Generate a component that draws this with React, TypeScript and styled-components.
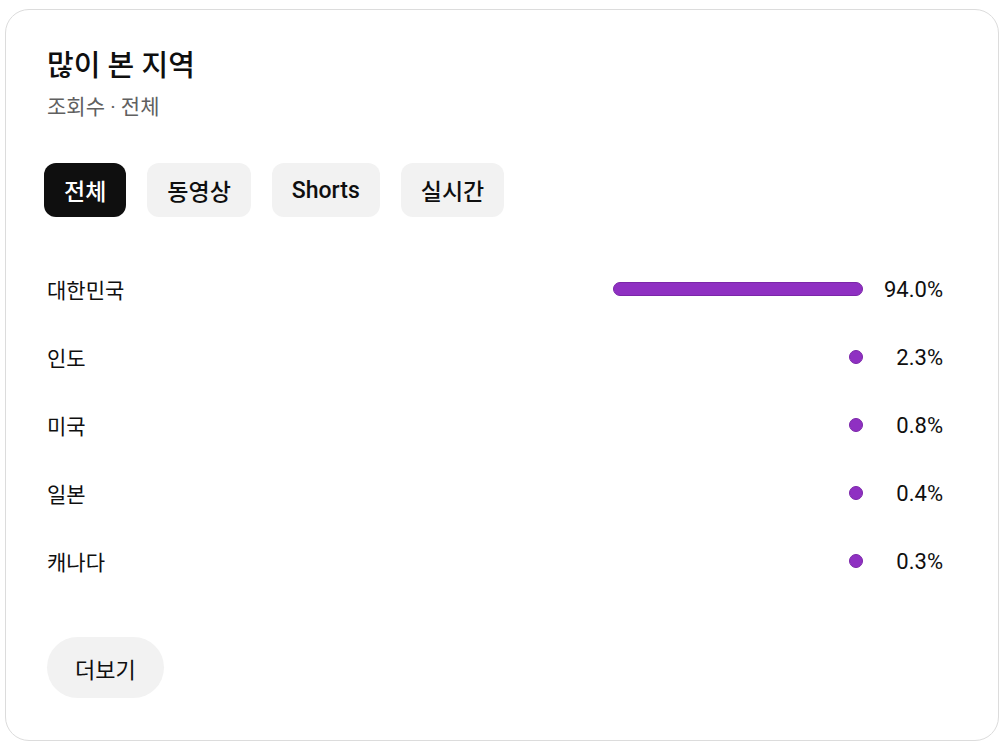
import React, { useState } from 'react';
import styled, { createGlobalStyle } from 'styled-components';

const GlobalStyle = createGlobalStyle`
  html, body {
    margin: 0;
    padding: 0;
    background: #ffffff;
  }
  body {
    font-family: Roboto, "Noto Sans CJK KR", sans-serif;
    color: #0f0f0f;
  }
`;

type Region = { name: string; pct: number };

const regions: Region[] = [
  { name: '대한민국', pct: 94.0 },
  { name: '인도', pct: 2.3 },
  { name: '미국', pct: 0.8 },
  { name: '일본', pct: 0.4 },
  { name: '캐나다', pct: 0.3 },
];

const tabs = ['전체', '동영상', 'Shorts', '실시간'];

const TRACK = 266;

const App = () => {
  const [active, setActive] = useState(0);

  return (
    <>
      <GlobalStyle />
      <Page>
        <Card>
          <Title>많이 본 지역</Title>
          <Subtitle>조회수 · 전체</Subtitle>
          <TabRow>
            {tabs.map((t, i) => (
              <Tab key={t} $active={i === active} onClick={() => setActive(i)}>
                {t}
              </Tab>
            ))}
          </TabRow>
          <List>
            {regions.map((r) => (
              <Row key={r.name}>
                <Name>{r.name}</Name>
                <BarCell>
                  <Bar style={{ width: Math.max(14, (r.pct / 100) * TRACK) }} />
                </BarCell>
                <Pct>{r.pct.toFixed(1)}%</Pct>
              </Row>
            ))}
          </List>
          <MoreBtn>더보기</MoreBtn>
        </Card>
      </Page>
    </>
  );
};

export default App;

const Page = styled.div`
  padding: 9px 5px;
`;

const Card = styled.div`
  box-sizing: border-box;
  width: 994px;
  height: 732px;
  border: 1px solid #dcdcdc;
  border-radius: 24px;
  padding: 36px 55px 0 38px;
  display: flex;
  flex-direction: column;
`;

const Title = styled.h1`
  margin: 0 0 0 3px;
  font-size: 29px;
  line-height: 40px;
  font-weight: 500;
`;

const Subtitle = styled.div`
  margin: 7px 0 0 3px;
  font-size: 21px;
  line-height: 28px;
  color: #606060;
`;

const TabRow = styled.div`
  display: flex;
  gap: 21px;
  margin-top: 42px;
`;

const Tab = styled.button<{ $active: boolean }>`
  height: 54px;
  padding: 0 20px;
  border: none;
  border-radius: 12px;
  font-family: inherit;
  font-size: 23px;
  font-weight: 500;
  cursor: pointer;
  background: ${(p) => (p.$active ? '#0f0f0f' : '#f2f2f2')};
  color: ${(p) => (p.$active ? '#ffffff' : '#0f0f0f')};
`;

const List = styled.div`
  display: flex;
  flex-direction: column;
  margin-top: 38px;
`;

const Row = styled.div`
  display: flex;
  align-items: center;
  height: 68px;
`;

const Name = styled.div`
  flex: 1;
  padding-left: 3px;
  font-size: 21px;
`;

const BarCell = styled.div`
  width: ${TRACK}px;
  display: flex;
  justify-content: flex-end;
`;

const Bar = styled.div`
  box-sizing: border-box;
  height: 14px;
  border-radius: 7px;
  background: #8f30c2;
  border: 1px solid #7b26a9;
`;

const Pct = styled.div`
  width: 80px;
  text-align: right;
  font-size: 22px;
`;

const MoreBtn = styled.button`
  margin-top: 42px;
  margin-left: 3px;
  align-self: flex-start;
  height: 61px;
  padding: 0 28px;
  border: none;
  border-radius: 31px;
  background: #f2f2f2;
  color: #0f0f0f;
  font-family: inherit;
  font-size: 22px;
  font-weight: 400;
  cursor: pointer;
`;
